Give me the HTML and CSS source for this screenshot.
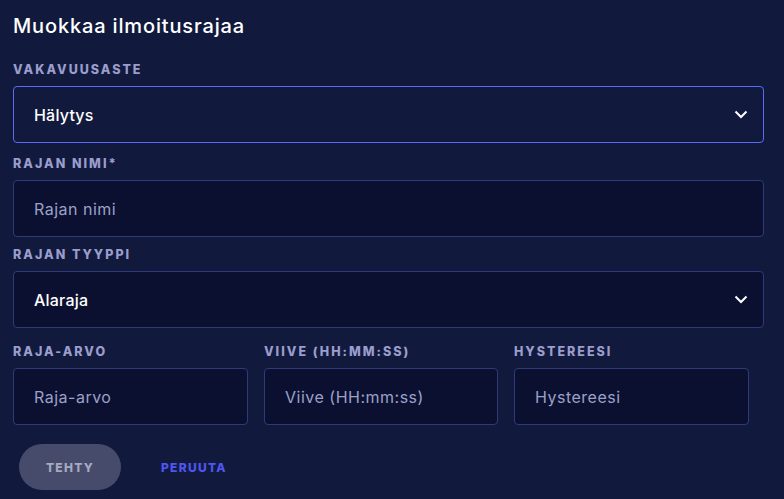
FILE: index.html
```html
<!DOCTYPE html>
<html lang="fi">
<head>
    <meta charset="UTF-8">
    <title>Muokkaa ilmoitusrajaa</title>
    <link rel="stylesheet" href="styles.css">
</head>
<body>
    <div class="dialog">
        <h2 class="title">Muokkaa ilmoitusrajaa</h2>

        <div class="field">
            <label class="label">Vakavuusaste</label>
            <div class="control select focused">
                <span class="value">Hälytys</span>
                <svg class="chevron" width="14" height="9" viewBox="0 0 14 9"><path d="M1.5 1.5 7 7l5.5-5.5" fill="none" stroke="#fff" stroke-width="2"/></svg>
            </div>
        </div>

        <div class="field field-tight">
            <label class="label">Rajan nimi*</label>
            <div class="control input"><span class="placeholder">Rajan nimi</span></div>
        </div>

        <div class="field">
            <label class="label">Rajan tyyppi</label>
            <div class="control select">
                <span class="value">Alaraja</span>
                <svg class="chevron" width="14" height="9" viewBox="0 0 14 9"><path d="M1.5 1.5 7 7l5.5-5.5" fill="none" stroke="#fff" stroke-width="2"/></svg>
            </div>
        </div>

        <div class="row">
            <div class="field">
                <label class="label">Raja-arvo</label>
                <div class="control input"><span class="placeholder">Raja-arvo</span></div>
            </div>
            <div class="field">
                <label class="label">Viive (HH:MM:SS)</label>
                <div class="control input"><span class="placeholder">Viive (HH:mm:ss)</span></div>
            </div>
            <div class="field">
                <label class="label">Hystereesi</label>
                <div class="control input"><span class="placeholder">Hystereesi</span></div>
            </div>
        </div>

        <div class="actions">
            <button class="btn btn-done">Tehty</button>
            <button class="btn btn-cancel">Peruuta</button>
        </div>
    </div>
</body>
</html>
```

FILE: styles.css
```css
* {
    box-sizing: border-box;
    margin: 0;
    padding: 0;
}

body {
    background: #111a3d;
    font-family: Inter, "Open Sans", sans-serif;
    color: #fff;
    width: 784px;
    height: 499px;
    overflow: hidden;
}

.dialog {
    padding: 13px 20px 0 13px;
}

.title {
    font-size: 20px;
    font-weight: 500;
    letter-spacing: 0.85px;
    line-height: 26px;
    margin-bottom: 23px;
}

.field {
    display: flex;
    flex-direction: column;
    margin-bottom: 13px;
}

.field-tight {
    margin-bottom: 10px;
}

.label {
    font-size: 12.5px;
    font-weight: 800;
    letter-spacing: 2px;
    text-transform: uppercase;
    color: #9b9dcc;
    line-height: 16px;
    margin-bottom: 8px;
}

.control {
    height: 57px;
    border: 1px solid #2f3b78;
    border-radius: 4px;
    background: #0b1030;
    display: flex;
    align-items: center;
    padding: 0 20px;
    font-size: 16px;
}

.control.focused {
    border-color: #5b6bf5;
    background: #111a3d;
}

.select .value {
    flex: 1;
    font-weight: 500;
    letter-spacing: 0.2px;
}

.chevron {
    margin-right: -5px;
}

.placeholder {
    color: #9ca1c9;
    letter-spacing: 0.5px;
}

.row {
    display: grid;
    grid-template-columns: 235px 234px 235px;
    column-gap: 16px;
    margin-top: 16px;
}

.row .field {
    margin-bottom: 19px;
}

.actions {
    display: flex;
    align-items: center;
    gap: 40px;
    padding-left: 6px;
}

.btn {
    font-family: inherit;
    font-size: 12px;
    font-weight: 800;
    letter-spacing: 1.3px;
    text-transform: uppercase;
    border: none;
    background: none;
    cursor: pointer;
}

.btn-done {
    width: 102px;
    height: 46px;
    border-radius: 23px;
    background: #464b6b;
    color: #a7aac0;
}

.btn-cancel {
    color: #4f55f2;
}
```
